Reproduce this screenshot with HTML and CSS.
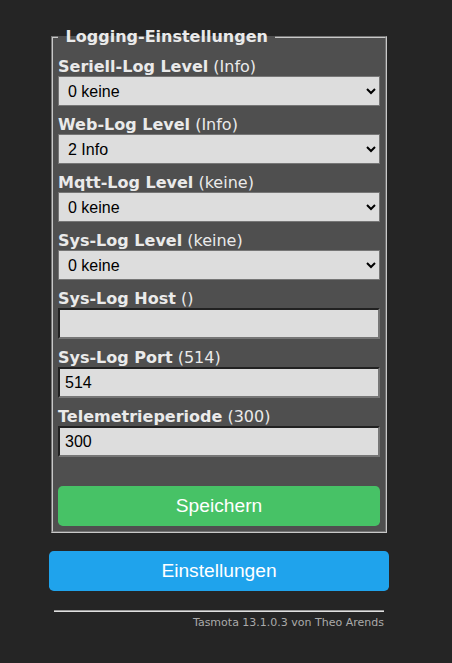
FILE: index.html
```html
<!DOCTYPE html>
<html lang="de">
<head>
    <meta charset="utf-8">
    <title>Logging-Einstellungen</title>
    <link rel="stylesheet" href="styles.css">
</head>
<body>
<div class="page">
    <fieldset class="panel">
        <legend class="panel-title"><b>&nbsp;Logging-Einstellungen&nbsp;</b></legend>
        <form class="log-form" method="get" action="lg">
            <p class="field"><b>Seriell-Log Level</b> (Info)
                <select class="field-select" name="l0">
                    <option value="0" selected>0 keine</option>
                    <option value="1">1 Fehler</option>
                    <option value="2">2 Info</option>
                    <option value="3">3 Debug</option>
                    <option value="4">4 Mehr Debug</option>
                </select>
            </p>
            <p class="field"><b>Web-Log Level</b> (Info)
                <select class="field-select" name="l1">
                    <option value="0">0 keine</option>
                    <option value="1">1 Fehler</option>
                    <option value="2" selected>2 Info</option>
                    <option value="3">3 Debug</option>
                    <option value="4">4 Mehr Debug</option>
                </select>
            </p>
            <p class="field"><b>Mqtt-Log Level</b> (keine)
                <select class="field-select" name="l2">
                    <option value="0" selected>0 keine</option>
                    <option value="1">1 Fehler</option>
                    <option value="2">2 Info</option>
                    <option value="3">3 Debug</option>
                    <option value="4">4 Mehr Debug</option>
                </select>
            </p>
            <p class="field"><b>Sys-Log Level</b> (keine)
                <select class="field-select" name="l3">
                    <option value="0" selected>0 keine</option>
                    <option value="1">1 Fehler</option>
                    <option value="2">2 Info</option>
                    <option value="3">3 Debug</option>
                    <option value="4">4 Mehr Debug</option>
                </select>
            </p>
            <p class="field"><b>Sys-Log Host</b> ()
                <input class="field-input" name="lh" value="">
            </p>
            <p class="field"><b>Sys-Log Port</b> (514)
                <input class="field-input" name="lp" value="514">
            </p>
            <p class="field"><b>Telemetrieperiode</b> (300)
                <input class="field-input" name="lt" value="300">
            </p>
            <button class="btn btn-save" name="save" type="submit">Speichern</button>
        </form>
    </fieldset>
    <form class="back-form" action="cn">
        <button class="btn">Einstellungen</button>
    </form>
    <div class="footer">
        <hr class="footer-line">
        <a class="footer-link" href="#">Tasmota 13.1.0.3 von Theo Arends</a>
    </div>
</div>
</body>
</html>
```

FILE: styles.css
```css
body{margin:0 14px 0 0;background:#252525;color:#eaeaea;font-family:"DejaVu Sans",Verdana,sans-serif;font-size:16px;}
.page{width:340px;margin:0 auto;padding-top:27px;}

.panel{margin:0 2px;padding:2px 5px 5px;background:#4f4f4f;border:2px groove #c8c8c8;}
.panel-title{padding:0 2px;line-height:19px;}

.field{margin:9px 0;line-height:19px;}
.field-select,
.field-input{
    display:block;
    width:100%;
    box-sizing:border-box;
    padding:5px;
    font-family:"Liberation Sans",Arial,sans-serif;
    font-size:16px;
    background:#dddddd;
    color:#000;
}
.field-select{height:30px;}
.field-input{height:31px;}

.btn{
    display:block;
    width:100%;
    height:40px;
    border:0;
    border-radius:0.3rem;
    background:#1fa3ec;
    color:#fff;
    font-family:"Liberation Sans",Arial,sans-serif;
    font-size:19.2px;
    cursor:pointer;
}
.btn-save{margin-top:29px;background:#47c266;}

.back-form{margin-top:18px;}

.footer{padding:0 5px;text-align:right;font-size:11px;}
.footer-line{margin:19px 0 4px;border:0;border-top:1px solid #9a9a9a;border-bottom:1px solid #e0e0e0;}
.footer-link{color:#aaa;text-decoration:none;}
```
